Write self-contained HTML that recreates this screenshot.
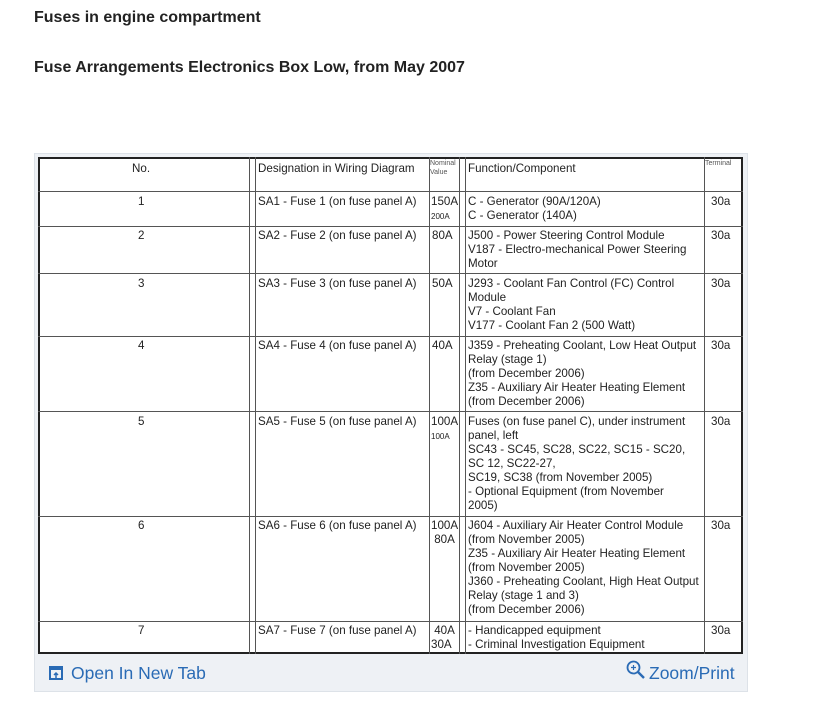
<!DOCTYPE html>
<html><head><meta charset="utf-8"><style>
body{margin:0;width:819px;height:705px;background:#fff;font-family:"Liberation Sans",Arial,sans-serif;position:relative;overflow:hidden}
h1{position:absolute;left:34px;margin:0;font-size:16px;font-weight:bold;color:#222}
.box{position:absolute;left:34px;top:153px;width:714px;height:539px;background:#eef1f5;border:1px solid #dde2e8;box-sizing:border-box}
.tbl{position:absolute;left:38px;top:157px;width:705px;height:497px;background:#fff;border:2px solid #222;box-sizing:border-box}
.v{position:absolute;top:157px;height:497px;width:1px;background:#555}
.h{position:absolute;left:38px;width:705px;height:1px;background:#555}
.t{position:absolute;font-size:11.6px;line-height:14px;color:#222;white-space:nowrap}
.s{font-size:8px;line-height:9px}
.link{position:absolute;top:663px;font-size:17.5px;color:#2a6bb5}
</style></head><body>
<h1 style="top:9px">Fuses in engine compartment</h1>
<h1 style="top:59px">Fuse Arrangements Electronics Box Low, from May 2007</h1>
<div class="box"></div>
<div class="tbl"></div>
<div class="v" style="left:249px"></div><div class="v" style="left:255px"></div>
<div class="v" style="left:429px"></div><div class="v" style="left:459px"></div>
<div class="v" style="left:465px"></div><div class="v" style="left:704px"></div>
<div class="h" style="top:191px"></div><div class="h" style="top:226px"></div>
<div class="h" style="top:273px"></div><div class="h" style="top:336px"></div>
<div class="h" style="top:411px"></div><div class="h" style="top:516px"></div>
<div class="h" style="top:621px"></div>

<div class="t" style="left:132px;top:162px">No.</div>
<div class="t" style="left:258px;top:162px">Designation in Wiring Diagram</div>
<div class="t s" style="left:430px;top:159px;font-size:7px;color:#555">Nominal<br>Value</div>
<div class="t" style="left:468px;top:162px">Function/Component</div>
<div class="t s" style="left:705px;top:159px;font-size:7px;color:#555">Terminal</div>

<div class="t" style="left:138px;top:195px">1</div>
<div class="t" style="left:258px;top:195px">SA1 - Fuse 1 (on fuse panel A)</div>
<div class="t" style="left:431px;top:195px">150A<br><span class="s">200A</span></div>
<div class="t" style="left:468px;top:195px">C - Generator (90A/120A)<br>C - Generator (140A)</div>
<div class="t" style="left:711px;top:195px">30a</div>

<div class="t" style="left:138px;top:229px">2</div>
<div class="t" style="left:258px;top:229px">SA2 - Fuse 2 (on fuse panel A)</div>
<div class="t" style="left:432px;top:229px">80A</div>
<div class="t" style="left:468px;top:229px">J500 - Power Steering Control Module<br>V187 - Electro-mechanical Power Steering<br>Motor</div>
<div class="t" style="left:711px;top:229px">30a</div>

<div class="t" style="left:138px;top:277px">3</div>
<div class="t" style="left:258px;top:277px">SA3 - Fuse 3 (on fuse panel A)</div>
<div class="t" style="left:432px;top:277px">50A</div>
<div class="t" style="left:468px;top:277px">J293 - Coolant Fan Control (FC) Control<br>Module<br>V7 - Coolant Fan<br>V177 - Coolant Fan 2 (500 Watt)</div>
<div class="t" style="left:711px;top:277px">30a</div>

<div class="t" style="left:138px;top:339px">4</div>
<div class="t" style="left:258px;top:339px">SA4 - Fuse 4 (on fuse panel A)</div>
<div class="t" style="left:432px;top:339px">40A</div>
<div class="t" style="left:468px;top:339px">J359 - Preheating Coolant, Low Heat Output<br>Relay (stage 1)<br>(from December 2006)<br>Z35 - Auxiliary Air Heater Heating Element<br>(from December 2006)</div>
<div class="t" style="left:711px;top:339px">30a</div>

<div class="t" style="left:138px;top:415px">5</div>
<div class="t" style="left:258px;top:415px">SA5 - Fuse 5 (on fuse panel A)</div>
<div class="t" style="left:431px;top:415px">100A<br><span class="s">100A</span></div>
<div class="t" style="left:468px;top:415px">Fuses (on fuse panel C), under instrument<br>panel, left<br>SC43 - SC45, SC28, SC22, SC15 - SC20,<br>SC 12, SC22-27,<br>SC19, SC38 (from November 2005)<br>- Optional Equipment (from November<br>2005)</div>
<div class="t" style="left:711px;top:415px">30a</div>

<div class="t" style="left:138px;top:519px">6</div>
<div class="t" style="left:258px;top:519px">SA6 - Fuse 6 (on fuse panel A)</div>
<div class="t" style="left:431px;top:519px">100A<br>&nbsp;80A</div>
<div class="t" style="left:468px;top:519px">J604 - Auxiliary Air Heater Control Module<br>(from November 2005)<br>Z35 - Auxiliary Air Heater Heating Element<br>(from November 2005)<br>J360 - Preheating Coolant, High Heat Output<br>Relay (stage 1 and 3)<br>(from December 2006)</div>
<div class="t" style="left:711px;top:519px">30a</div>

<div class="t" style="left:138px;top:624px">7</div>
<div class="t" style="left:258px;top:624px">SA7 - Fuse 7 (on fuse panel A)</div>
<div class="t" style="left:431px;top:624px">&nbsp;40A<br>30A</div>
<div class="t" style="left:468px;top:624px">- Handicapped equipment<br>- Criminal Investigation Equipment</div>
<div class="t" style="left:711px;top:624px">30a</div>

<svg style="position:absolute;left:49px;top:666px" width="14" height="14" viewBox="0 0 14 14"><rect x="1" y="1" width="12" height="12" fill="none" stroke="#2a6bb5" stroke-width="2"/><rect x="1" y="1" width="12" height="3" fill="#2a6bb5"/><path d="M7 12V7M5 9l2-2 2 2" stroke="#2a6bb5" stroke-width="1.5" fill="none"/></svg>
<div class="link" style="left:71px">Open In New Tab</div>
<svg style="position:absolute;left:626px;top:660px" width="20" height="20" viewBox="0 0 20 20"><circle cx="7.5" cy="7.5" r="6" fill="none" stroke="#2a6bb5" stroke-width="1.8"/><path d="M12 12l6 6" stroke="#2a6bb5" stroke-width="2.4"/><path d="M7.5 5v5M5 7.5h5" stroke="#2a6bb5" stroke-width="1.2"/></svg>
<div class="link" style="left:649px">Zoom/Print</div>
</body></html>
